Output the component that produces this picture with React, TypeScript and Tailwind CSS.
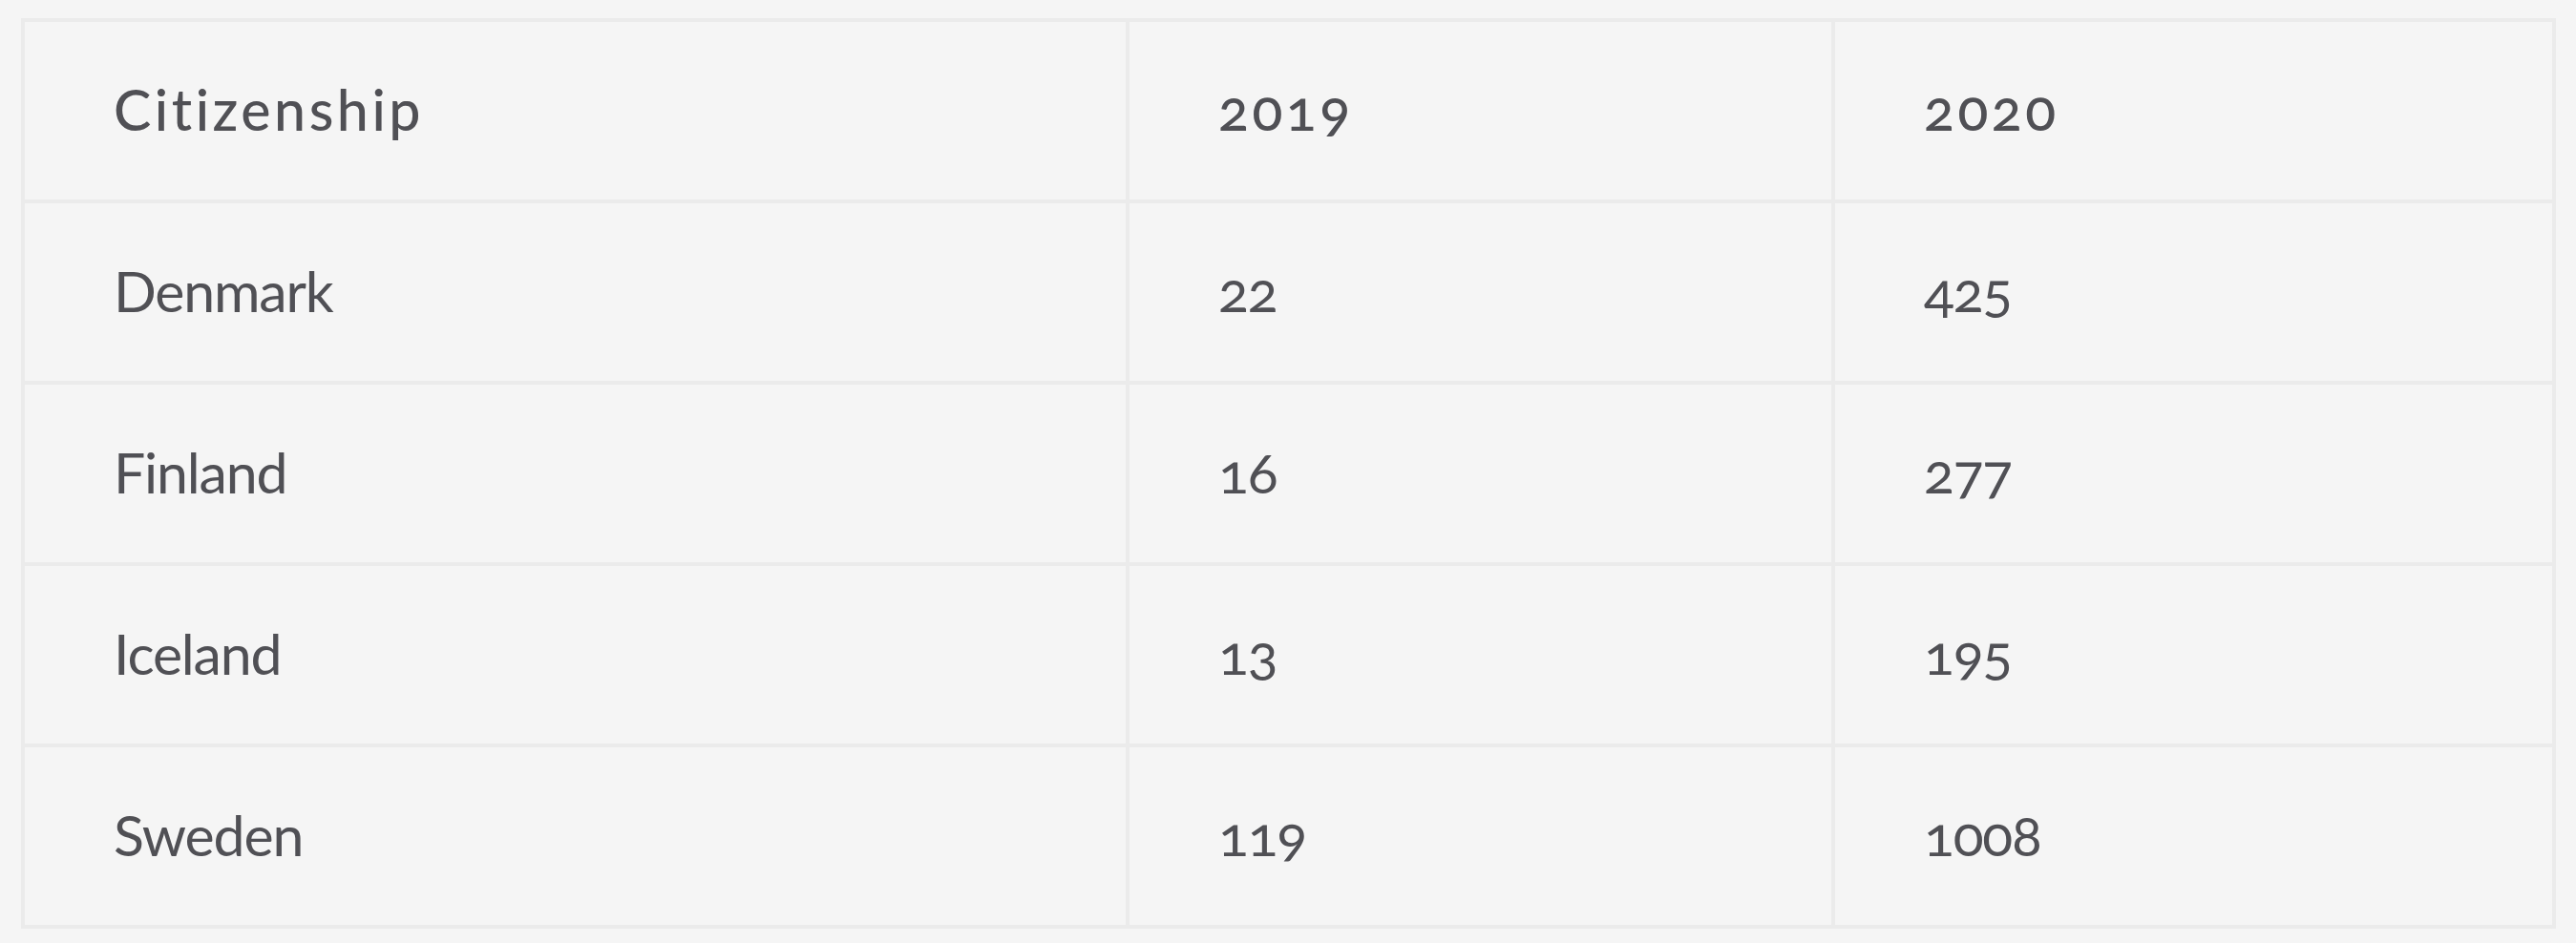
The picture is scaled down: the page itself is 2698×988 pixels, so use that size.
const rows = [
  { country: "Denmark", y2019: "22", y2020: "425" },
  { country: "Finland", y2019: "16", y2020: "277" },
  { country: "Iceland", y2019: "13", y2020: "195" },
  { country: "Sweden", y2019: "119", y2020: "1008" },
];

function Cell({ children, head }: { children: React.ReactNode; head?: boolean }) {
  return (
    <div
      className={
        "bg-[#f5f5f5] h-[186px] flex items-center pl-[93px] pb-[4px] " +
        (head ? "font-medium tracking-[0.06em]" : "tracking-[-0.02em]")
      }
    >
      {children}
    </div>
  );
}

export default function App() {
  return (
    <div className="bg-[#f5f5f5] min-h-screen pt-[19px] pl-[22px]">
      <div
        className="w-[2655px] grid grid-cols-[1153px_735px_751px] gap-[4px] p-[4px] bg-[#ebebeb] text-[#505055] text-[59px] leading-none [font-variant-numeric:oldstyle-nums]"
        style={{ fontFamily: '"Lato", "Noto Sans", sans-serif' }}
      >
        <Cell head>Citizenship</Cell>
        <Cell head>2019</Cell>
        <Cell head>2020</Cell>
        {rows.map((r) => (
          <>
            <Cell key={r.country}>{r.country}</Cell>
            <Cell key={r.country + "a"}>{r.y2019}</Cell>
            <Cell key={r.country + "b"}>{r.y2020}</Cell>
          </>
        ))}
      </div>
    </div>
  );
}
